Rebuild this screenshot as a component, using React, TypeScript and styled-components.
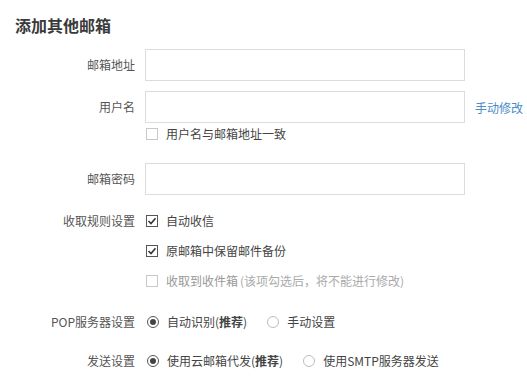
import styled, { createGlobalStyle } from 'styled-components'

const GlobalStyle = createGlobalStyle`
  html, body {
    margin: 0;
    padding: 0;
    background: #fff;
  }
  body {
    font-family: 'Noto Sans CJK SC', 'Liberation Sans', sans-serif;
    font-size: 12px;
    color: #333;
  }
`

const Page = styled.div`
  width: 527px;
  height: 388px;
  overflow: hidden;
  padding: 15px 0 0 15px;
  box-sizing: border-box;
`

const Title = styled.h2`
  margin: 0 0 14px;
  font-size: 16px;
  line-height: 20px;
  font-weight: bold;
  color: #3a3a3a;
`

const Row = styled.div<{ $h?: number; $mt?: number }>`
  display: grid;
  grid-template-columns: 120px 1fr;
  column-gap: 10px;
  align-items: center;
  height: ${(p) => p.$h ?? 30}px;
  margin-top: ${(p) => p.$mt ?? 0}px;
`

const Label = styled.div`
  text-align: right;
  color: #555;
  font-size: 12px;
  line-height: 16px;
  white-space: nowrap;
`

const Control = styled.div`
  display: flex;
  align-items: center;
  white-space: nowrap;
`

const Input = styled.input`
  width: 320px;
  height: 32px;
  box-sizing: border-box;
  border: 1px solid #dcdcdc;
  outline: none;
  padding: 0 8px;
  font-family: inherit;
  font-size: 12px;
`

const Link = styled.a`
  margin-left: 10px;
  color: #4a8bc9;
  font-size: 12px;
  text-decoration: none;
`

const Option = styled.label<{ $disabled?: boolean; $gap?: number }>`
  display: inline-flex;
  align-items: center;
  gap: 8px;
  margin-right: ${(p) => p.$gap ?? 0}px;
  color: ${(p) => (p.$disabled ? '#999' : '#444')};
  font-size: 12px;
  line-height: 16px;
  b {
    font-weight: bold;
    color: #444;
  }
`

const Box = styled.span<{ $on?: boolean }>`
  display: inline-flex;
  align-items: center;
  justify-content: center;
  width: 12px;
  height: 12px;
  margin-left: 1px;
  box-sizing: border-box;
  border: 1px solid ${(p) => (p.$on ? '#555' : '#c8c8c8')};
  background: #fff;
`

const Radio = styled.span<{ $on?: boolean }>`
  display: inline-flex;
  align-items: center;
  justify-content: center;
  width: 12px;
  height: 12px;
  margin-left: 2px;
  box-sizing: border-box;
  border-radius: 50%;
  border: 1px solid ${(p) => (p.$on ? '#555' : '#bdbdbd')};
  &::after {
    content: '';
    display: ${(p) => (p.$on ? 'block' : 'none')};
    width: 6px;
    height: 6px;
    border-radius: 50%;
    background: #444;
  }
`

const Hint = styled.span`
  color: #aaa;
  margin-left: 2px;
`

function Check({ on }: { on?: boolean }) {
  return (
    <Box $on={on}>
      {on && (
        <svg width="10" height="10" viewBox="0 0 10 10">
          <polyline
            points="1.5,5 4,7.5 8.5,2.2"
            fill="none"
            stroke="#333"
            strokeWidth="1.6"
          />
        </svg>
      )}
    </Box>
  )
}

export default function App() {
  return (
    <Page>
      <GlobalStyle />
      <Title>添加其他邮箱</Title>

      <Row $h={32}>
        <Label>邮箱地址</Label>
        <Control>
          <Input />
        </Control>
      </Row>
      <Row $h={32} $mt={10}>
        <Label>用户名</Label>
        <Control>
          <Input />
          <Link href="#">手动修改</Link>
        </Control>
      </Row>
      <Row $h={21}>
        <Label />
        <Control>
          <Option>
            <Check />
            用户名与邮箱地址一致
          </Option>
        </Control>
      </Row>
      <Row $h={32} $mt={19}>
        <Label>邮箱密码</Label>
        <Control>
          <Input type="password" />
        </Control>
      </Row>

      <Row $mt={11}>
        <Label>收取规则设置</Label>
        <Control>
          <Option>
            <Check on />
            自动收信
          </Option>
        </Control>
      </Row>
      <Row>
        <Label />
        <Control>
          <Option>
            <Check on />
            原邮箱中保留邮件备份
          </Option>
        </Control>
      </Row>
      <Row>
        <Label />
        <Control>
          <Option $disabled>
            <Check />
            <span>
              收取到收件箱
              <Hint>(该项勾选后，将不能进行修改)</Hint>
            </span>
          </Option>
        </Control>
      </Row>

      <Row $h={39} $mt={6}>
        <Label>POP服务器设置</Label>
        <Control>
          <Option $gap={18}>
            <Radio $on />
            <span>
              自动识别(<b>推荐</b>)
            </span>
          </Option>
          <Option>
            <Radio />
            手动设置
          </Option>
        </Control>
      </Row>
      <Row $h={39}>
        <Label>发送设置</Label>
        <Control>
          <Option $gap={18}>
            <Radio $on />
            <span>
              使用云邮箱代发(<b>推荐</b>)
            </span>
          </Option>
          <Option>
            <Radio />
            使用SMTP服务器发送
          </Option>
        </Control>
      </Row>
    </Page>
  )
}
